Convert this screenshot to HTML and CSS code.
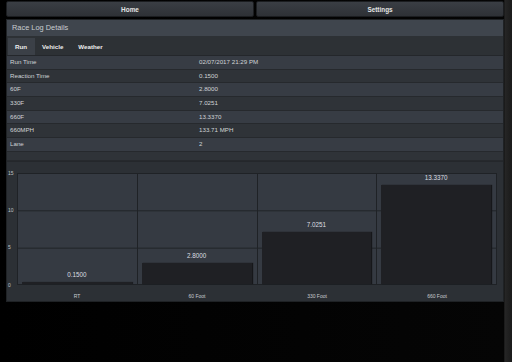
FILE: index.html
```html
<!DOCTYPE html>
<html lang="en">
<head>
<meta charset="UTF-8">
<meta name="viewport" content="width=device-width, initial-scale=1.0">
<title>Race Log Details</title>
<link rel="stylesheet" href="styles.css">
</head>
<body>
<div class="nav">
    <div class="nav-btn">Home</div>
    <div class="nav-btn">Settings</div>
</div>

<div class="panel">
    <div class="panel-title">Race Log Details</div>
    <div class="tabs">
        <div class="tab active">Run</div>
        <div class="tab">Vehicle</div>
        <div class="tab">Weather</div>
    </div>

    <div class="details">
        <div class="row"><span class="key">Run Time</span><span class="val">02/07/2017 21:29 PM</span></div>
        <div class="row"><span class="key">Reaction Time</span><span class="val">0.1500</span></div>
        <div class="row"><span class="key">60F</span><span class="val">2.8000</span></div>
        <div class="row"><span class="key">330F</span><span class="val">7.0251</span></div>
        <div class="row"><span class="key">660F</span><span class="val">13.3370</span></div>
        <div class="row"><span class="key">660MPH</span><span class="val">133.71 MPH</span></div>
        <div class="row"><span class="key">Lane</span><span class="val">2</span></div>
        <div class="row empty"></div>
    </div>

    <div class="chart">
        <div class="y-axis">
            <span>15</span>
            <span>10</span>
            <span>5</span>
            <span>0</span>
        </div>
        <div class="plot">
            <div class="slot">
                <span class="bar-label">0.1500</span>
                <div class="bar" style="height: 1%"></div>
            </div>
            <div class="slot">
                <span class="bar-label">2.8000</span>
                <div class="bar" style="height: 18.67%"></div>
            </div>
            <div class="slot">
                <span class="bar-label">7.0251</span>
                <div class="bar" style="height: 46.83%"></div>
            </div>
            <div class="slot">
                <span class="bar-label">13.3370</span>
                <div class="bar" style="height: 88.91%"></div>
            </div>
        </div>
        <div class="x-axis">
            <span>RT</span>
            <span>60 Foot</span>
            <span>330 Foot</span>
            <span>660 Foot</span>
        </div>
    </div>
</div>
</body>
</html>
```

FILE: styles.css
```css
body {
    margin: 0;
    padding: 0;
    height: 362px;
    background-color: #000;
    background-image: linear-gradient(to right, #000 0, #050505 98.4%, #262626 98.6%, #1a1a1a 100%);
    font-family: "Liberation Sans", Arial, sans-serif;
    overflow: hidden;
}

.nav {
    display: flex;
    gap: 2px;
    padding: 1px 0 0 6px;
    width: 498px;
}

.nav-btn {
    flex: 1;
    height: 16px;
    line-height: 15px;
    text-align: center;
    font-size: 6.4px;
    font-weight: bold;
    color: #e4e4e4;
    background: linear-gradient(#3a3e44, #2e3136);
    border: 1px solid #1b1d20;
    box-sizing: border-box;
    border-radius: 2px;
}

.panel {
    margin: 2px 0 0 6px;
    width: 498px;
    background-color: #2f3338;
    border: 1px solid #1f2225;
    box-sizing: border-box;
}

.panel-title {
    height: 16px;
    line-height: 16px;
    padding-left: 5px;
    font-size: 7.4px;
    color: #c9ccd0;
    background-color: #3f454d;
}

.tabs {
    display: flex;
    align-items: flex-end;
    height: 19px;
    padding-left: 1px;
    background-color: #2d3135;
}

.tab {
    height: 17px;
    line-height: 17px;
    padding: 0 8px 0 7px;
    font-size: 6.2px;
    font-weight: bold;
    color: #eeeeee;
}

.tab.active {
    background-color: #3b4047;
}

.details {
    border-top: 1px solid #24272b;
}

.row {
    display: flex;
    height: 12.67px;
    line-height: 12.67px;
    font-size: 6.2px;
    color: #d0d3d6;
    border-bottom: 1px solid #26292d;
    background-color: #2f3338;
}

.row:nth-child(odd) {
    background-color: #373c44;
}

.row.empty {
    height: 8px;
    background-color: #2f3338;
}

.key {
    width: 189px;
    padding-left: 3px;
}

.val {
    flex: 1;
}

.chart {
    display: grid;
    grid-template-columns: 10px 480px;
    grid-template-rows: 112px 16px;
    padding: 11px 0 0 0;
    border-top: 1px solid #24272b;
    background-color: #2c3035;
}

.y-axis {
    display: flex;
    flex-direction: column;
    justify-content: space-between;
    margin: -3px 0 -3px 0;
    font-size: 5px;
    color: #bfc2c6;
    padding-left: 1px;
}

.plot {
    display: grid;
    grid-template-columns: repeat(4, 1fr);
    border-left: 1px solid #1f2226;
    border-bottom: 1px solid #1f2226;
    background-color: #353a42;
    background-image: linear-gradient(#1f2226 1px, transparent 1px);
    background-size: 100% 37.33px;
}

.slot {
    display: flex;
    flex-direction: column;
    justify-content: flex-end;
    align-items: center;
    padding: 0 5px 0 4px;
    border-right: 1px solid #1f2226;
}

.bar-label {
    font-size: 6.3px;
    color: #dcdee1;
    margin-bottom: 4px;
}

.bar {
    align-self: stretch;
    background-color: #1f2024;
    box-shadow: 1px 0 1px #16171a;
}

.x-axis {
    grid-column: 2;
    display: grid;
    grid-template-columns: repeat(4, 1fr);
    text-align: center;
    font-size: 5px;
    line-height: 22px;
    color: #c8cbcf;
}
```
